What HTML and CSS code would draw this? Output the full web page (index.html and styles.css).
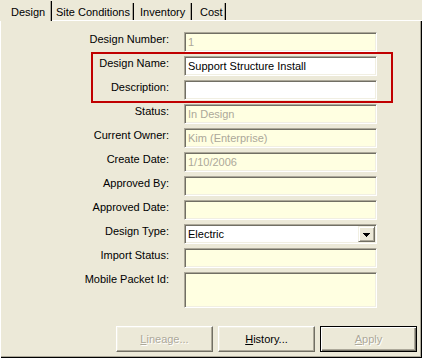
FILE: index.html
```html
<!DOCTYPE html>
<html>
<head>
<meta charset="utf-8">
<link rel="stylesheet" href="styles.css">
</head>
<body>
<div class="window">
  <div class="tabs">
    <div class="tab tab-design selected">Design</div>
    <div class="tab tab-site">Site Conditions</div>
    <div class="tab tab-inv">Inventory</div>
    <div class="tab tab-cost">Cost</div>
  </div>
  <div class="panel">
    <div class="form">
      <div class="label">Design Number:</div>
      <div class="field ro disabled">1</div>
      <div class="label">Design Name:</div>
      <div class="field">Support Structure Install</div>
      <div class="label">Description:</div>
      <div class="field"></div>
      <div class="label">Status:</div>
      <div class="field ro disabled">In Design</div>
      <div class="label">Current Owner:</div>
      <div class="field ro disabled">Kim (Enterprise)</div>
      <div class="label">Create Date:</div>
      <div class="field ro disabled">1/10/2006</div>
      <div class="label">Approved By:</div>
      <div class="field ro"></div>
      <div class="label">Approved Date:</div>
      <div class="field ro"></div>
      <div class="label">Design Type:</div>
      <div class="field select"><span class="select-text">Electric</span><span class="drop"><svg width="7" height="4" viewBox="0 0 7 4"><rect x="0" y="0" width="7" height="1" fill="#000"/><rect x="1" y="1" width="5" height="1" fill="#000"/><rect x="2" y="2" width="3" height="1" fill="#000"/><rect x="3" y="3" width="1" height="1" fill="#000"/></svg></span></div>
      <div class="label">Import Status:</div>
      <div class="field ro"></div>
      <div class="label">Mobile Packet Id:</div>
      <div class="field ro tall"></div>
    </div>
    <div class="buttons">
      <div class="btn disabled-btn"><span><u>L</u>ineage...</span></div>
      <div class="btn"><span><u>H</u>istory...</span></div>
      <div class="btn default disabled-btn"><span><u>A</u>pply</span></div>
    </div>
  </div>
  <div class="highlight"></div>
</div>
</body>
</html>
```
FILE: styles.css
```css
html, body {
  margin: 0;
  padding: 0;
  background: #ECE9D8;
}
.window {
  position: relative;
  width: 422px;
  height: 358px;
  overflow: hidden;
  font-family: "Liberation Sans", Arial, sans-serif;
  font-size: 11px;
  color: #000;
  background: #ECE9D8;
}
.tabs {
  display: flex;
  align-items: flex-end;
  height: 20px;
  position: relative;
  z-index: 2;
}
.tab {
  box-sizing: border-box;
  height: 17px;
  padding-top: 2px;
  line-height: 14px;
  white-space: nowrap;
  border-right: 1px solid #000;
  box-shadow: inset -1px 0 0 #ACA899;
  background: #ECE9D8;
}
.tab.selected {
  height: 20px;
  margin-bottom: -1px;
  padding-top: 4px;
  box-shadow: inset -1px 0 0 #ACA899;
}
.tab-design { width: 52px; padding-left: 11px; height: 21px; }
.tab-site { width: 82px; padding-left: 4px; }
.tab-inv { width: 58px; padding-left: 6px; }
.tab-cost { width: 34px; padding-left: 8px; }
.panel {
  box-sizing: border-box;
  height: 338px;
  border-top: 1px solid #fff;
  border-left: 1px solid #fff;
  box-shadow: inset -1px -1px 0 #000, inset -2px -2px 0 #ACA899;
  padding-top: 11px;
}
.form {
  display: grid;
  grid-template-columns: 169px 193px;
  column-gap: 14px;
  row-gap: 4px;
}
.label {
  text-align: right;
  padding-right: 1px;
  padding-top: 1px;
  line-height: 13px;
  white-space: nowrap;
}
.field {
  box-sizing: border-box;
  height: 20px;
  background: #fff;
  border: 1px solid;
  border-color: #ACA899 #fff #fff #ACA899;
  box-shadow: inset 1px 1px 0 #716F64, inset -1px -1px 0 #F1EFE2;
  padding: 1px 3px;
  line-height: 16px;
  white-space: nowrap;
  overflow: hidden;
}
.field.ro {
  background: #FFFFE1;
}
.field.disabled {
  color: #ACA899;
}
.field.tall {
  height: 36px;
}
.field.select {
  display: flex;
  align-items: center;
  padding: 1px 1px 1px 3px;
}
.select-text {
  flex: 1;
}
.drop {
  box-sizing: border-box;
  width: 17px;
  height: 16px;
  display: flex;
  align-items: center;
  justify-content: center;
  background: #ECE9D8;
  border: 1px solid;
  border-color: #F1EFE2 #716F64 #716F64 #F1EFE2;
  box-shadow: inset 1px 1px 0 #fff, inset -1px -1px 0 #ACA899;
}
.drop svg {
  display: block;
  margin-top: 1px;
}
.buttons {
  display: flex;
  justify-content: flex-end;
  gap: 5px;
  margin-top: 18px;
  padding-right: 5px;
}
.btn {
  box-sizing: border-box;
  width: 97px;
  height: 26px;
  display: flex;
  align-items: center;
  justify-content: center;
  border: 1px solid;
  border-color: #fff #716F64 #716F64 #fff;
  box-shadow: inset -1px -1px 0 #ACA899, inset 1px 1px 0 #F1EFE2;
  background: #ECE9D8;
  line-height: 14px;
}
.btn.default {
  border: 1px solid #000;
  box-shadow: inset 1px 1px 0 #fff, inset -1px -1px 0 #716F64, inset -2px -2px 0 #ACA899;
}
.disabled-btn span {
  color: #ACA899;
  text-shadow: 1px 1px 0 #fff;
}
.highlight {
  position: absolute;
  left: 91px;
  top: 52px;
  width: 302px;
  height: 51px;
  box-sizing: border-box;
  border: 2px solid #C00000;
  pointer-events: none;
}
```
